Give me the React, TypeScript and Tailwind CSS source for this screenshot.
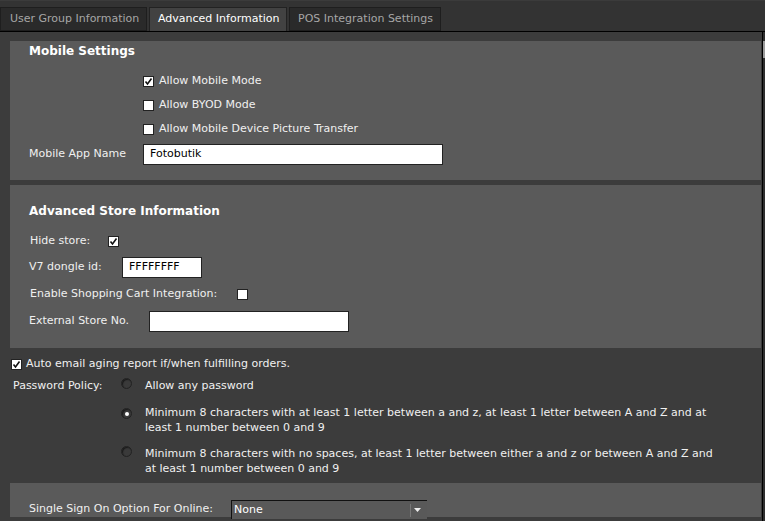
const font = "font-['DejaVu_Sans',Verdana,sans-serif]";

function Check({ on }: { on?: boolean }) {
  return (
    <span className="inline-flex h-[11px] w-[11px] shrink-0 items-center justify-center border border-[#222] bg-white">
      {on && (
        <svg width="9" height="9" viewBox="0 0 9 9">
          <path d="M1.5 4.5 L3.5 7 L7.5 1.5" fill="none" stroke="#111" strokeWidth="1.6" />
        </svg>
      )}
    </span>
  );
}

function Radio({ on }: { on?: boolean }) {
  return (
    <span className="inline-flex h-[11px] w-[11px] shrink-0 items-center justify-center rounded-full border border-[#222] bg-[#3a3a3a] shadow-[inset_1px_1px_1px_#1a1a1a]">
      {on && <span className="h-[4px] w-[4px] rounded-full bg-white" />}
    </span>
  );
}

function Input({ value, w }: { value?: string; w: string }) {
  return (
    <div className={`${w} flex h-[21px] items-center border border-[#222] bg-white px-[6px] text-[11px] text-black`}>
      {value}
    </div>
  );
}

export default function App() {
  return (
    <div className={`${font} h-[521px] w-[765px] overflow-hidden bg-[#333333] text-[11px] text-[#f0f0f0]`}>
      {/* tabs */}
      <div className="flex h-[31px] items-end gap-[2px] border-t border-[#3b3b3b]">
        <div className="flex h-[24px] w-[147px] items-center border border-[#1e1e1e] bg-[#2a2a2a] pl-[9px] text-[#a6a6a6]">
          User Group Information
        </div>
        <div className="flex h-[24px] w-[138px] items-center border border-[#222] border-b-0 bg-[#424242] pl-[8px] text-white">
          Advanced Information
        </div>
        <div className="flex h-[24px] w-[152px] items-center border border-[#1e1e1e] bg-[#2a2a2a] pl-[8px] text-[#a6a6a6]">
          POS Integration Settings
        </div>
      </div>

      <div className="flex h-[490px] border-t border-black">
        {/* main column */}
        <div className="flex w-[762px] flex-col bg-[#3c3c3c] pl-[10px] pr-[1px] pt-[9px]">
          {/* Mobile Settings */}
          <div className="h-[139px] bg-[#5a5a5a] pl-[19px]">
            <div className="mt-[2px] h-[16px] text-[12px] font-bold leading-[16px] text-white">Mobile Settings</div>
            <div className="mt-[10px] pl-[114px]">
              {[
                ["Allow Mobile Mode", true],
                ["Allow BYOD Mode", false],
                ["Allow Mobile Device Picture Transfer", false],
              ].map(([label, on]) => (
                <div key={label as string} className="flex h-[24px] items-center gap-[5px]">
                  <Check on={on as boolean} />
                  <span>{label}</span>
                </div>
              ))}
            </div>
            <div className="mt-[3px] flex h-[21px] items-center">
              <span className="w-[114px]">Mobile App Name</span>
              <Input value="Fotobutik" w="w-[300px]" />
            </div>
          </div>

          {/* Advanced Store Information */}
          <div className="mt-[5px] h-[163px] bg-[#5a5a5a] pl-[19px]">
            <div className="mt-[18px] h-[16px] text-[12px] font-bold leading-[16px] text-white">
              Advanced Store Information
            </div>
            <div className="mt-[12px] flex h-[20px] items-center pl-[1px]">
              <span className="w-[78px]">Hide store:</span>
              <Check on />
            </div>
            <div className="mt-[6px] flex h-[21px] items-center">
              <span className="w-[93px]">V7 dongle id:</span>
              <Input value="FFFFFFFF" w="w-[80px]" />
            </div>
            <div className="mt-[6px] flex h-[20px] items-center pl-[1px]">
              <span className="w-[207px]">Enable Shopping Cart Integration:</span>
              <Check />
            </div>
            <div className="mt-[7px] flex h-[21px] items-center">
              <span className="w-[120px]">External Store No.</span>
              <Input w="w-[200px]" />
            </div>
          </div>

          {/* options on dark area */}
          <div className="-ml-[10px] h-[135px] pl-[11px]">
            <div className="mt-[8px] flex h-[16px] items-center gap-[4px]">
              <Check on />
              <span>Auto email aging report if/when fulfilling orders.</span>
            </div>
            <div className="mt-[6px] flex">
              <div className="w-[110px] pl-[2px] leading-[16px]">Password Policy:</div>
              <div className="flex flex-col">
                <div className="flex">
                  <div className="w-[24px]">
                    <Radio />
                  </div>
                  <div className="leading-[16px]">Allow any password</div>
                </div>
                <div className="mt-[10px] flex">
                  <div className="w-[24px]">
                    <Radio on />
                  </div>
                  <div className="leading-[15px] whitespace-nowrap">
                    Minimum 8 characters with at least 1 letter between a and z, at least 1 letter between A and Z and at
                    <br />
                    least 1 number between 0 and 9
                  </div>
                </div>
                <div className="mt-[11px] flex">
                  <div className="w-[24px]">
                    <Radio />
                  </div>
                  <div className="leading-[15px] whitespace-nowrap">
                    Minimum 8 characters with no spaces, at least 1 letter between either a and z or between A and Z and
                    <br />
                    at least 1 number between 0 and 9
                  </div>
                </div>
              </div>
            </div>
          </div>

          {/* Single sign on */}
          <div className="h-[34px] bg-[#5a5a5a] pl-[19px] pt-[17px]">
            <div className="flex h-[19px] items-center">
              <span className="w-[202px]">Single Sign On Option For Online:</span>
              <div className="flex h-[19px] w-[196px] items-center border-l border-t border-[#111] bg-[#595959] pl-[2px] text-white">
                <span className="flex-1">None</span>
                <span className="mr-[4px] flex h-[13px] w-[13px] items-center justify-center border-l border-[#777]">
                  <svg width="7" height="4" viewBox="0 0 7 4">
                    <path d="M0 0 H7 L3.5 4 Z" fill="#eee" />
                  </svg>
                </span>
              </div>
            </div>
          </div>
        </div>

        {/* scrollbar */}
        <div className="flex w-[3px] flex-col border-l border-black bg-[#2e2e2e] pt-[9px]">
          <div className="h-[17px] bg-[#9a9a9a]" />
        </div>
      </div>
    </div>
  );
}
